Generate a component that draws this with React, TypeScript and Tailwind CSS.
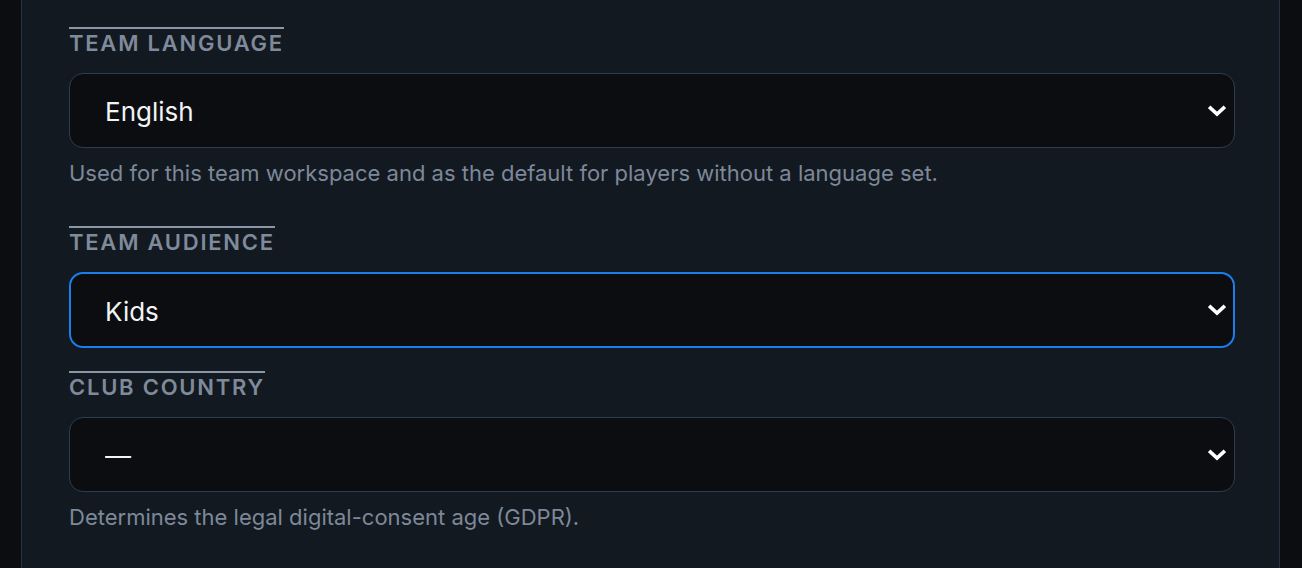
import { useState } from 'react'

interface FieldProps {
  label: string
  value: string
  options: string[]
  help?: string
  focused?: boolean
}

function Chevron() {
  return (
    <svg
      className="pointer-events-none absolute right-[9px] top-1/2 -translate-y-1/2"
      width="18"
      height="12"
      viewBox="0 0 18 12"
      fill="none"
      stroke="#ffffff"
      strokeWidth="3.6"
      strokeLinecap="square"
      strokeLinejoin="miter"
    >
      <polyline points="2.5,3 9,9 15.5,3" />
    </svg>
  )
}

function SelectField({ label, value, options, help, focused }: FieldProps) {
  const [current, setCurrent] = useState(value)

  return (
    <div className={help ? 'flex flex-col mb-[38px]' : 'flex flex-col mb-[23px]'}>
      <div className="flex">
        <span className="border-t-2 border-[#8b96a7] pt-[1px] text-[22px] leading-[26px] font-semibold tracking-[0.08em] text-[#7f8a9b] uppercase">
          {label}
        </span>
      </div>
      <div className="relative mt-[17px]">
        <select
          value={current}
          onChange={e => setCurrent(e.target.value)}
          className={
            focused
              ? 'w-full h-[76px] appearance-none rounded-[14px] border-2 border-[#1a7fea] bg-[#0b0d11] pl-[34px] pr-12 pt-[2px] text-[26px] text-[#f1f3f5] outline-none'
              : 'w-full h-[75px] appearance-none rounded-[14px] border border-[#2e3c51] bg-[#0b0d11] pl-[35px] pr-12 pt-[2px] text-[26px] text-[#f1f3f5] outline-none'
          }
        >
          {options.map(opt => (
            <option key={opt} value={opt}>
              {opt}
            </option>
          ))}
        </select>
        <Chevron />
      </div>
      {help && <p className="mt-[10px] text-[22px] leading-[30px] text-[#7d8899]">{help}</p>}
    </div>
  )
}

export default function App() {
  return (
    <div className="min-h-[568px] bg-[#0b0d10] flex font-['Inter',sans-serif]">
      <div className="ml-[21px] w-[1259px] border-x border-[#263244] bg-[#131920] pt-[27px] pl-[47px] pr-[44px]">
        <SelectField
          label="Team language"
          value="English"
          options={['English', 'Deutsch', 'Français', 'Español']}
          help="Used for this team workspace and as the default for players without a language set."
        />
        <SelectField label="Team audience" value="Kids" options={['Kids', 'Youth', 'Adults']} focused />
        <SelectField
          label="Club country"
          value="—"
          options={['—', 'Germany', 'France', 'Spain']}
          help="Determines the legal digital-consent age (GDPR)."
        />
      </div>
    </div>
  )
}
